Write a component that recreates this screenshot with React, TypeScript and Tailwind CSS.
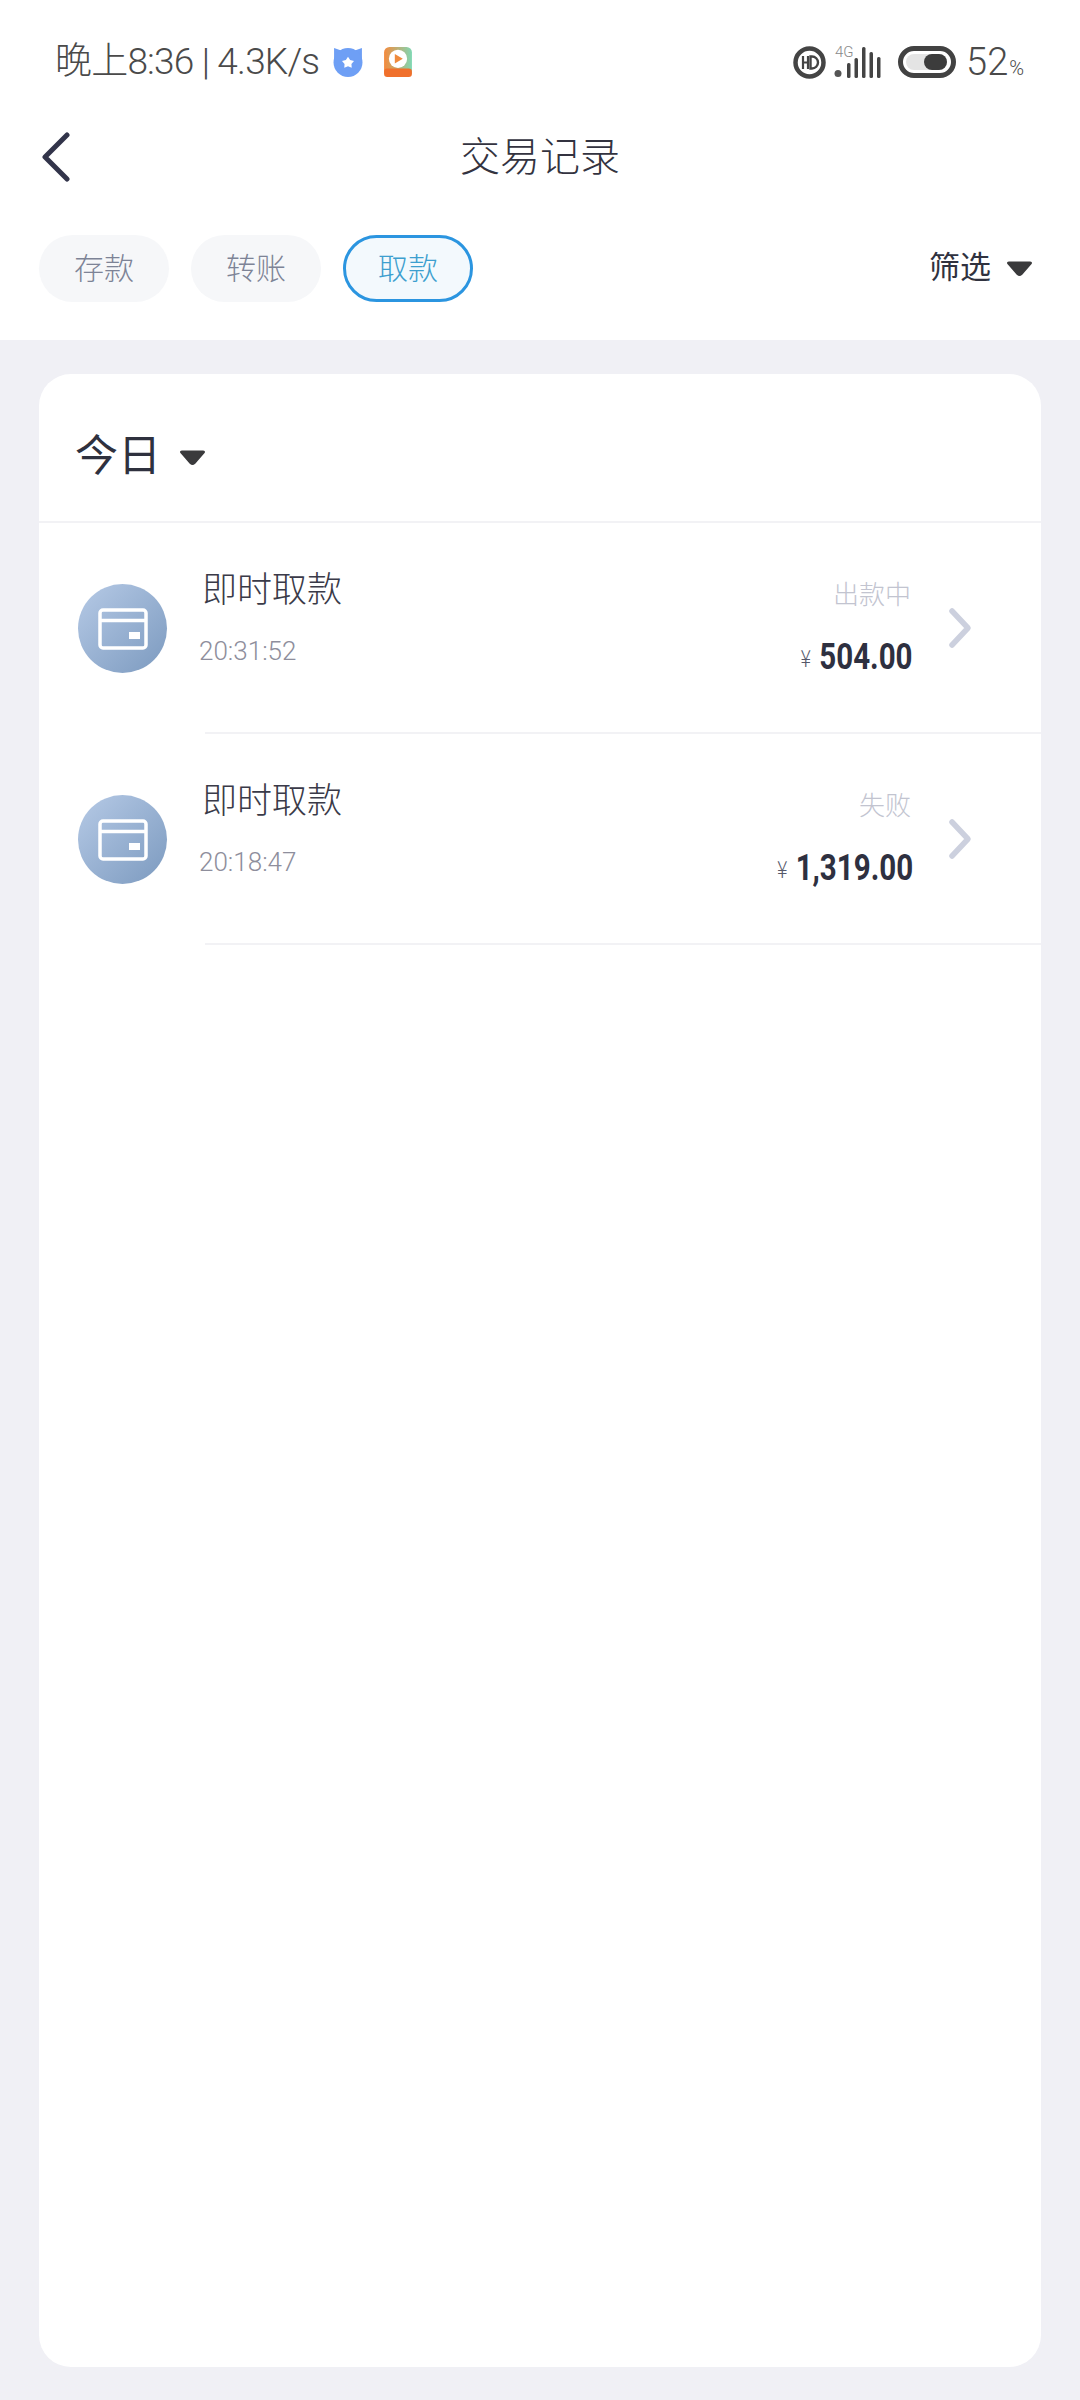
// App.tsx
const cjk = "font-['Noto_Sans_CJK_SC',sans-serif]";

const records = [
  { time: '20:31:52', status: '出款中', amount: '504.00' },
  { time: '20:18:47', status: '失败', amount: '1,319.00' },
];

const Caret = () => (
  <svg width="27" height="17" viewBox="0 0 27 17">
    <path d="M3 2.500h21q1.500 0 .6 1.200L15.500 14a3 3 0 0 1-4 0L2.400 3.700Q1.500 2.500 3 2.500z" fill="#3a3a3c" stroke="#3a3a3c" strokeWidth="2" strokeLinejoin="round" />
  </svg>
);

const CardIcon = () => (
  <svg width="50" height="42" viewBox="0 0 50 42" fill="none">
    <rect x="2" y="2" width="46" height="38" rx="3" stroke="#fff" strokeWidth="3.500" />
    <path d="M2 12.500h46" stroke="#fff" strokeWidth="3.500" />
    <rect x="31" y="24" width="11" height="7" fill="#fff" />
  </svg>
);

const StatusBar = () => (
  <div className="h-[124px] flex items-center pl-[55px] pr-[56px] text-[#4a4a4a]">
    <span className="text-[37px] font-light tracking-[-0.8px] whitespace-nowrap w-[278px] font-['Roboto','Noto_Sans_CJK_SC',sans-serif]">
      晚上8:36 | 4.3K/s
    </span>
    <svg width="30" height="30" viewBox="0 0 28 28">
      <path d="M1 1l6 2h14l6-2v13H1z" fill="#6e9ff5" />
      <circle cx="14" cy="14.500" r="13.500" fill="#6e9ff5" />
      <path d="M14 9l2 3.200 3.600.8-2.400 2.800.3 3.600L14 18l-3.500 1.400.3-3.600L8.400 13l3.600-.8z" fill="#fff" />
    </svg>
    <svg width="28" height="30" viewBox="0 0 26 28" className="ml-[21px]">
      <defs>
        <linearGradient id="app" x1="0" y1="0" x2="1" y2="0">
          <stop offset="0" stopColor="#f58a3c" />
          <stop offset="1" stopColor="#7fd8b4" />
        </linearGradient>
      </defs>
      <rect width="26" height="28" rx="5" fill="url(#app)" />
      <rect y="20" width="26" height="8" rx="3" fill="#f0702c" />
      <circle cx="13" cy="11" r="8.500" fill="#fff" />
      <path d="M10 6.500l7.500 4.500-7.500 4.500z" fill="#f08a3c" />
    </svg>
    <div className="flex-1" />
    <svg width="33" height="33" viewBox="0 0 33 33">
      <circle cx="16.500" cy="16.500" r="14" fill="none" stroke="#444" strokeWidth="4.500" />
      <path d="M10 10v13M15 10v13M10 16.500h5" stroke="#444" strokeWidth="2.200" fill="none" />
      <path d="M17.500 10.500h1.500a6 6 0 0 1 0 12h-1.500z" fill="none" stroke="#444" strokeWidth="2.400" />
    </svg>
    <div className="relative ml-[8px] w-[47px] h-[33px]">
      <span className="absolute left-[1px] top-[-1px] text-[15px] leading-[15px] text-[#8a8a8a] font-light font-['Roboto',sans-serif]">4G</span>
      <svg width="47" height="33" viewBox="0 0 47 33" className="absolute left-0 top-0">
        <circle cx="4" cy="27.500" r="3.500" fill="#555" />
        <rect x="13" y="17" width="3.500" height="15" rx="1.500" fill="#444" />
        <rect x="20.500" y="12" width="3.500" height="20" rx="1.500" fill="#444" />
        <rect x="28" y="1" width="3.500" height="31" rx="1.500" fill="#444" />
        <rect x="35.500" y="6" width="3.500" height="26" rx="1.500" fill="#444" />
        <rect x="43" y="11" width="3.500" height="21" rx="1.500" fill="#444" />
      </svg>
    </div>
    <div className="ml-[17px] w-[58px] h-[32px] rounded-full border-[5px] border-[#424242] flex items-center p-[3px] pr-[4px] shrink-0">
      <div className="flex-1 h-full rounded-full bg-[#e4e4e4] flex justify-end">
        <div className="w-[23px] h-full rounded-full bg-[#3c3c3c]" />
      </div>
    </div>
    <span className="ml-[10px] text-[38px] leading-none font-light text-[#4a4a4a] font-['Roboto',sans-serif]">52</span>
    <span className="ml-[1px] mt-[12px] text-[20px] leading-none font-light text-[#4a4a4a] font-['Roboto',sans-serif]">%</span>
  </div>
);

const Tab = ({ label, active }: { label: string; active?: boolean }) => (
  <div
    className={
      active
        ? 'w-[130px] h-[67px] rounded-full border-[3px] border-[#2b95e0] bg-[#f3f9fd] flex items-center justify-center text-[30px] text-[#3d9fcf]'
        : 'w-[130px] h-[67px] rounded-full bg-[#f6f7f9] flex items-center justify-center text-[30px] text-[#7d8396]'
    }
  >
    <span className="mt-[-4px]">{label}</span>
  </div>
);

export default function App() {
  return (
    <div className={`w-[1080px] h-[2400px] bg-[#f0f0f5] overflow-hidden font-light ${cjk}`}>
      <div className="bg-white h-[340px]">
        <StatusBar />
        <div className="h-[66px] grid grid-cols-[1fr_auto_1fr] items-center pl-[41px]">
          <svg width="30" height="50" viewBox="0 0 30 50" fill="none">
            <path d="M26 3L4 25l22 22" stroke="#32344a" strokeWidth="5" strokeLinecap="round" strokeLinejoin="round" />
          </svg>
          <div className="text-[40px] leading-none mt-[-6px] text-[#333340] pr-[41px]">交易记录</div>
          <div />
        </div>
        <div className="mt-[45px] flex items-center pl-[39px] pr-[47px]">
          <div className="flex gap-[22px]">
            <Tab label="存款" />
            <Tab label="转账" />
            <Tab label="取款" active />
          </div>
          <div className="ml-auto flex items-center gap-[15px] text-[31px] font-normal text-[#30323f]">
            <span className="mt-[-6px]">筛选</span>
            <Caret />
          </div>
        </div>
      </div>

      <div className="mt-[34px] mx-[39px] h-[1993px] rounded-[32px] bg-white overflow-hidden">
        <div className="h-[149px] border-b-2 border-[#f2f2f5] flex items-center pl-[36px] gap-[18px]">
          <span className="text-[43px] font-normal mt-[10px] text-[#2f313e]">今日</span>
          <span className="mt-[20px]">
            <Caret />
          </span>
        </div>
        {records.map((r) => (
          <div key={r.time} className="flex h-[211px]">
            <div className="w-[166px] shrink-0 pl-[39px] flex items-center">
              <div className="w-[89px] h-[89px] rounded-full bg-gradient-to-br from-[#b6cae6] to-[#7c9abf] flex items-center justify-center">
                <CardIcon />
              </div>
            </div>
            <div className="flex-1 flex items-center border-b-2 border-[#f2f2f5] pr-[69px]">
              <div className="flex flex-col ml-[-3px]">
                <span className="text-[35px] leading-[40px] mt-[-22px] text-[#3a3a48]">即时取款</span>
                <span className="text-[26px] leading-[32px] mt-[28px] ml-[-3px] font-light text-[#8e8e9c] font-['Roboto',sans-serif]">{r.time}</span>
              </div>
              <div className="ml-auto flex flex-col items-end">
                <span className="text-[26px] leading-[30px] mt-[-6px] text-[#c2c4d0]">{r.status}</span>
                <div className="flex items-center mt-[29px] mb-[-5px] mr-[-2px] origin-right scale-x-[0.82]">
                  <span className="text-[24px] leading-none mr-[10px] text-[#55586a]">¥</span>
                  <span className="text-[36px] leading-[40px] font-bold text-[#2e3040] font-['Roboto',sans-serif]">{r.amount}</span>
                </div>
              </div>
              <svg width="24" height="42" viewBox="0 0 24 42" fill="none" className="ml-[37px] shrink-0">
                <path d="M4 4l16 17L4 38" stroke="#ccd0de" strokeWidth="5.500" strokeLinecap="round" strokeLinejoin="round" />
              </svg>
            </div>
          </div>
        ))}
      </div>
    </div>
  );
}
